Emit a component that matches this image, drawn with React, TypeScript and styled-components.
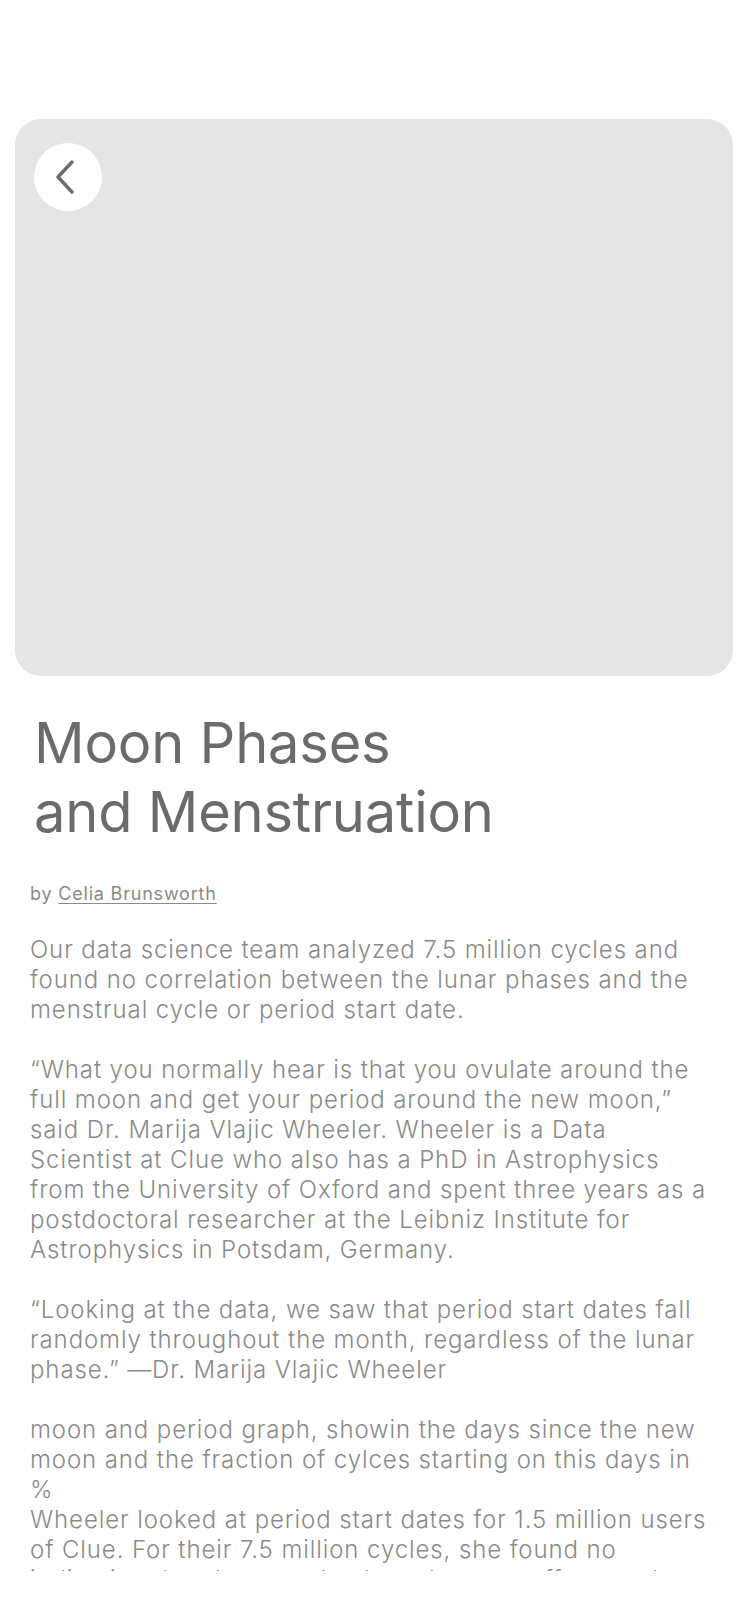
import React from "react";
import styled, { createGlobalStyle } from "styled-components";

const GlobalStyle = createGlobalStyle`
    html, body {
        margin: 0;
        padding: 0;
        background: #ffffff;
    }
    * {
        box-sizing: border-box;
    }
`;

const paragraphs = [
    "Our data science team analyzed 7.5 million cycles and found no correlation between the lunar phases and the menstrual cycle or period start date.",
    "“What you normally hear is that you ovulate around the full moon and get your period around the new moon,” said Dr. Marija Vlajic Wheeler. Wheeler is a Data Scientist at Clue who also has a PhD in Astrophysics from the University of Oxford and spent three years as a postdoctoral researcher at the Leibniz Institute for Astrophysics in Potsdam, Germany.",
    "“Looking at the data, we saw that period start dates fall randomly throughout the month, regardless of the lunar phase.” —Dr. Marija Vlajic Wheeler",
];

const Article = () => {
    return (
        <Screen>
            <GlobalStyle />
            <Scroll>
                <Hero>
                    <BackButton aria-label="Back">
                        <svg width="22" height="34" viewBox="0 0 22 34" fill="none">
                            <path
                                d="M18 2 L4 17 L18 32"
                                stroke="#6b6b6b"
                                strokeWidth="3.4"
                                strokeLinecap="round"
                                strokeLinejoin="round"
                            />
                        </svg>
                    </BackButton>
                </Hero>
                <Title>
                    Moon Phases
                    <br />
                    and Menstruation
                </Title>
                <Byline>
                    by <Author>Celia Brunsworth</Author>
                </Byline>
                <Body>
                    {paragraphs.map((p) => (
                        <Paragraph key={p.slice(0, 20)}>{p}</Paragraph>
                    ))}
                    <Caption>
                        moon and period graph, showin the days since the new moon and the fraction of cylces starting on this days in %
                    </Caption>
                    <Paragraph>
                        Wheeler looked at period start dates for 1.5 million users of Clue. For their 7.5 million cycles, she found no
                        indication that the moon's phase has any effect on the timing of periods or ovulation.
                    </Paragraph>
                </Body>
            </Scroll>
        </Screen>
    );
};

const Screen = styled.div`
    width: 750px;
    height: 1624px;
    background: #ffffff;
    overflow: hidden;
`;

const Scroll = styled.div`
    height: 1571px;
    overflow: hidden;
    padding-top: 119px;
    display: flex;
    flex-direction: column;
`;

const Hero = styled.div`
    margin: 0 17px 0 15px;
    height: 557px;
    flex-shrink: 0;
    border-radius: 26px;
    background: #e5e5e5;
    padding: 24px 0 0 19px;
`;

const BackButton = styled.div`
    width: 68px;
    height: 68px;
    border-radius: 50%;
    background: #ffffff;
    display: flex;
    align-items: center;
    justify-content: center;
    padding-right: 6px;
`;

const Title = styled.h1`
    margin: 33px 0 0 0;
    padding: 0 34px;
    font-family: Inter, "Noto Sans", sans-serif;
    font-weight: 400;
    font-size: 56px;
    line-height: 69px;
    letter-spacing: -0.2px;
    color: #6b6b6b;
`;

const Byline = styled.div`
    margin-top: 36px;
    padding: 0 30px;
    font-family: Inter, "Noto Sans", sans-serif;
    font-size: 18px;
    line-height: 22px;
    letter-spacing: 0.8px;
    color: #8a8a8a;
`;

const Author = styled.span`
    text-decoration: underline;
    text-underline-offset: 3px;
`;

const Body = styled.div`
    margin-top: 30px;
    padding: 0 38px 0 30px;
    width: 750px;
    font-family: Inter, "Noto Sans", sans-serif;
    font-weight: 300;
    font-size: 24px;
    line-height: 30px;
    letter-spacing: 0.9px;
    color: #8a8a8a;
`;

const Paragraph = styled.p`
    margin: 0 0 30px 0;
`;

const Caption = styled.p`
    margin: 0;
`;

export default Article;
